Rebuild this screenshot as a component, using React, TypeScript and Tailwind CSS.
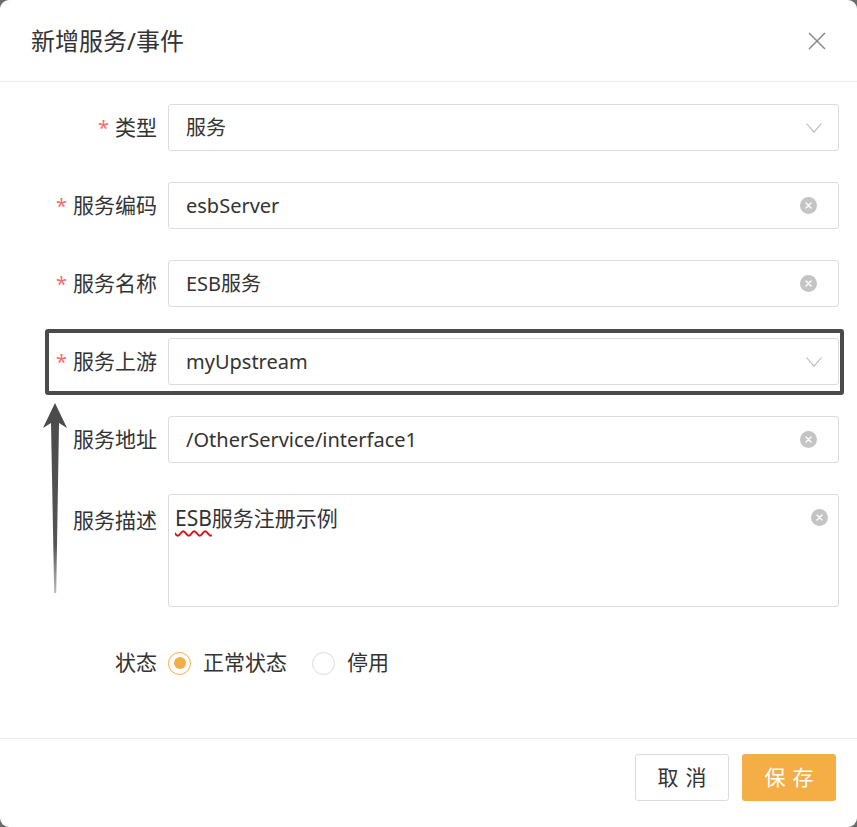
import React from "react";

const FONT = { fontFamily: '"Noto Sans", "Noto Sans CJK SC", sans-serif' };

function ClearIcon() {
  return (
    <span className="flex h-[17px] w-[17px] items-center justify-center rounded-full bg-[#c4c4c4]">
      <svg width="9" height="9" viewBox="0 0 9 9">
        <path d="M2 2 L7 7 M7 2 L2 7" stroke="#fff" strokeWidth="1.4" strokeLinecap="round" />
      </svg>
    </span>
  );
}

function Chevron() {
  return (
    <svg width="16" height="10" viewBox="0 0 16 10">
      <path d="M0.5 0.5 L8 9.2 L15.5 0.5" stroke="#b8b8b8" strokeWidth="1.1" fill="none" />
    </svg>
  );
}

function Label({ text, required }: { text: string; required?: boolean }) {
  return (
    <div className="flex w-[157px] shrink-0 items-center justify-end text-[21px] text-[#333]">
      {required && <span className="mr-[6px] text-[20px] text-[#f56c6c]">*</span>}
      <span>{text}</span>
    </div>
  );
}

function Field({
  label,
  value,
  required,
  icon,
}: {
  label: string;
  value: string;
  required?: boolean;
  icon: "clear" | "chevron";
}) {
  return (
    <div className="flex h-[47px] items-center">
      <Label text={label} required={required} />
      <div className="ml-[11px] mr-[18px] flex h-[47px] flex-1 items-center justify-between rounded-[3px] border border-[#dcdcdc] pl-[17px] pr-[14px]">
        <span className="text-[20px] text-[#333]">{value}</span>
        {icon === "clear" ? (
          <span className="mr-[7px]">
            <ClearIcon />
          </span>
        ) : (
          <span className="mr-[2px]">
            <Chevron />
          </span>
        )}
      </div>
    </div>
  );
}

function Radio({ checked, label }: { checked?: boolean; label: string }) {
  return (
    <div className="flex items-center">
      {checked ? (
        <span className="flex h-[23px] w-[23px] items-center justify-center rounded-full border border-[#f4ae45]">
          <span className="h-[12px] w-[12px] rounded-full bg-[#f4ae45]" />
        </span>
      ) : (
        <span className="h-[23px] w-[23px] rounded-full border border-[#d9d9d9]" />
      )}
      <span className="ml-[12px] text-[21px] text-[#333]">{label}</span>
    </div>
  );
}

export default function App() {
  return (
    <div className="h-[827px] w-[857px] bg-[#6b6b6b]" style={FONT}>
      <div className="relative flex h-[827px] w-[857px] flex-col overflow-hidden rounded-[9px] bg-white">
        {/* header */}
        <div className="flex h-[82px] shrink-0 items-center justify-between border-b border-[#ececec] pl-[31px] pr-[31px]">
          <span className="text-[24px] text-[#333]">新增服务/事件</span>
          <svg width="18" height="18" viewBox="0 0 18 18">
            <path d="M1 1 L17 17 M17 1 L1 17" stroke="#888" strokeWidth="1.5" />
          </svg>
        </div>

        {/* form */}
        <div className="flex flex-col pt-[22px]">
          <div className="flex flex-col gap-[31px]">
            <Field label="类型" value="服务" required icon="chevron" />
            <Field label="服务编码" value="esbServer" required icon="clear" />
            <Field label="服务名称" value="ESB服务" required icon="clear" />
            <Field label="服务上游" value="myUpstream" required icon="chevron" />
            <Field label="服务地址" value="/OtherService/interface1" icon="clear" />
            <div className="flex h-[113px] items-start">
              <div className="pt-[11px]">
                <Label text="服务描述" />
              </div>
              <div className="ml-[11px] mr-[18px] flex h-[113px] flex-1 items-start justify-between rounded-[3px] border border-[#dcdcdc] pl-[6px] pr-[10px] pt-[9px]">
                <span className="text-[21px] leading-[28px] text-[#333]">
                  <span className="underline decoration-[#e01010] decoration-wavy decoration-[1.5px] underline-offset-[4px]">ESB</span>
                  服务注册示例
                </span>
                <span className="mt-[5px]">
                  <ClearIcon />
                </span>
              </div>
            </div>
          </div>

          {/* status */}
          <div className="mt-[44px] flex h-[24px] items-center">
            <div className="flex w-[157px] shrink-0 justify-end text-[21px] text-[#333]">状态</div>
            <div className="ml-[11px] flex items-center gap-[25px]">
              <Radio checked label="正常状态" />
              <Radio label="停用" />
            </div>
          </div>
        </div>

        {/* footer */}
        <div className="mt-auto flex h-[89px] shrink-0 items-start justify-end gap-[13px] border-t border-[#ececec] pr-[21px] pt-[15px]">
          <button className="h-[47px] w-[94px] rounded-[3px] border border-[#dcdcdc] bg-white pl-[7px] text-[21px] tracking-[7px] text-[#333]">
            取消
          </button>
          <button className="h-[47px] w-[94px] rounded-[3px] bg-[#f4ae45] pl-[7px] text-[21px] tracking-[7px] text-white">
            保存
          </button>
        </div>

        {/* annotation box */}
        <div className="pointer-events-none absolute left-[45px] top-[329px] h-[66px] w-[799px] rounded-[3px] border-[4px] border-[#4a4a4a]" />
        {/* annotation arrow */}
        <svg className="pointer-events-none absolute left-[40px] top-[403px]" width="32" height="192" viewBox="0 0 32 192">
          <defs>
            <linearGradient id="ag" x1="0" y1="0" x2="0" y2="1">
              <stop offset="0" stopColor="#4a4a4a" />
              <stop offset="0.75" stopColor="#555" />
              <stop offset="1" stopColor="#bbb" />
            </linearGradient>
          </defs>
          <path d="M15 0 L27 25 L19 20 L16.2 190 L14.2 190 L11 20 L3 25 Z" fill="url(#ag)" />
        </svg>
      </div>
    </div>
  );
}
